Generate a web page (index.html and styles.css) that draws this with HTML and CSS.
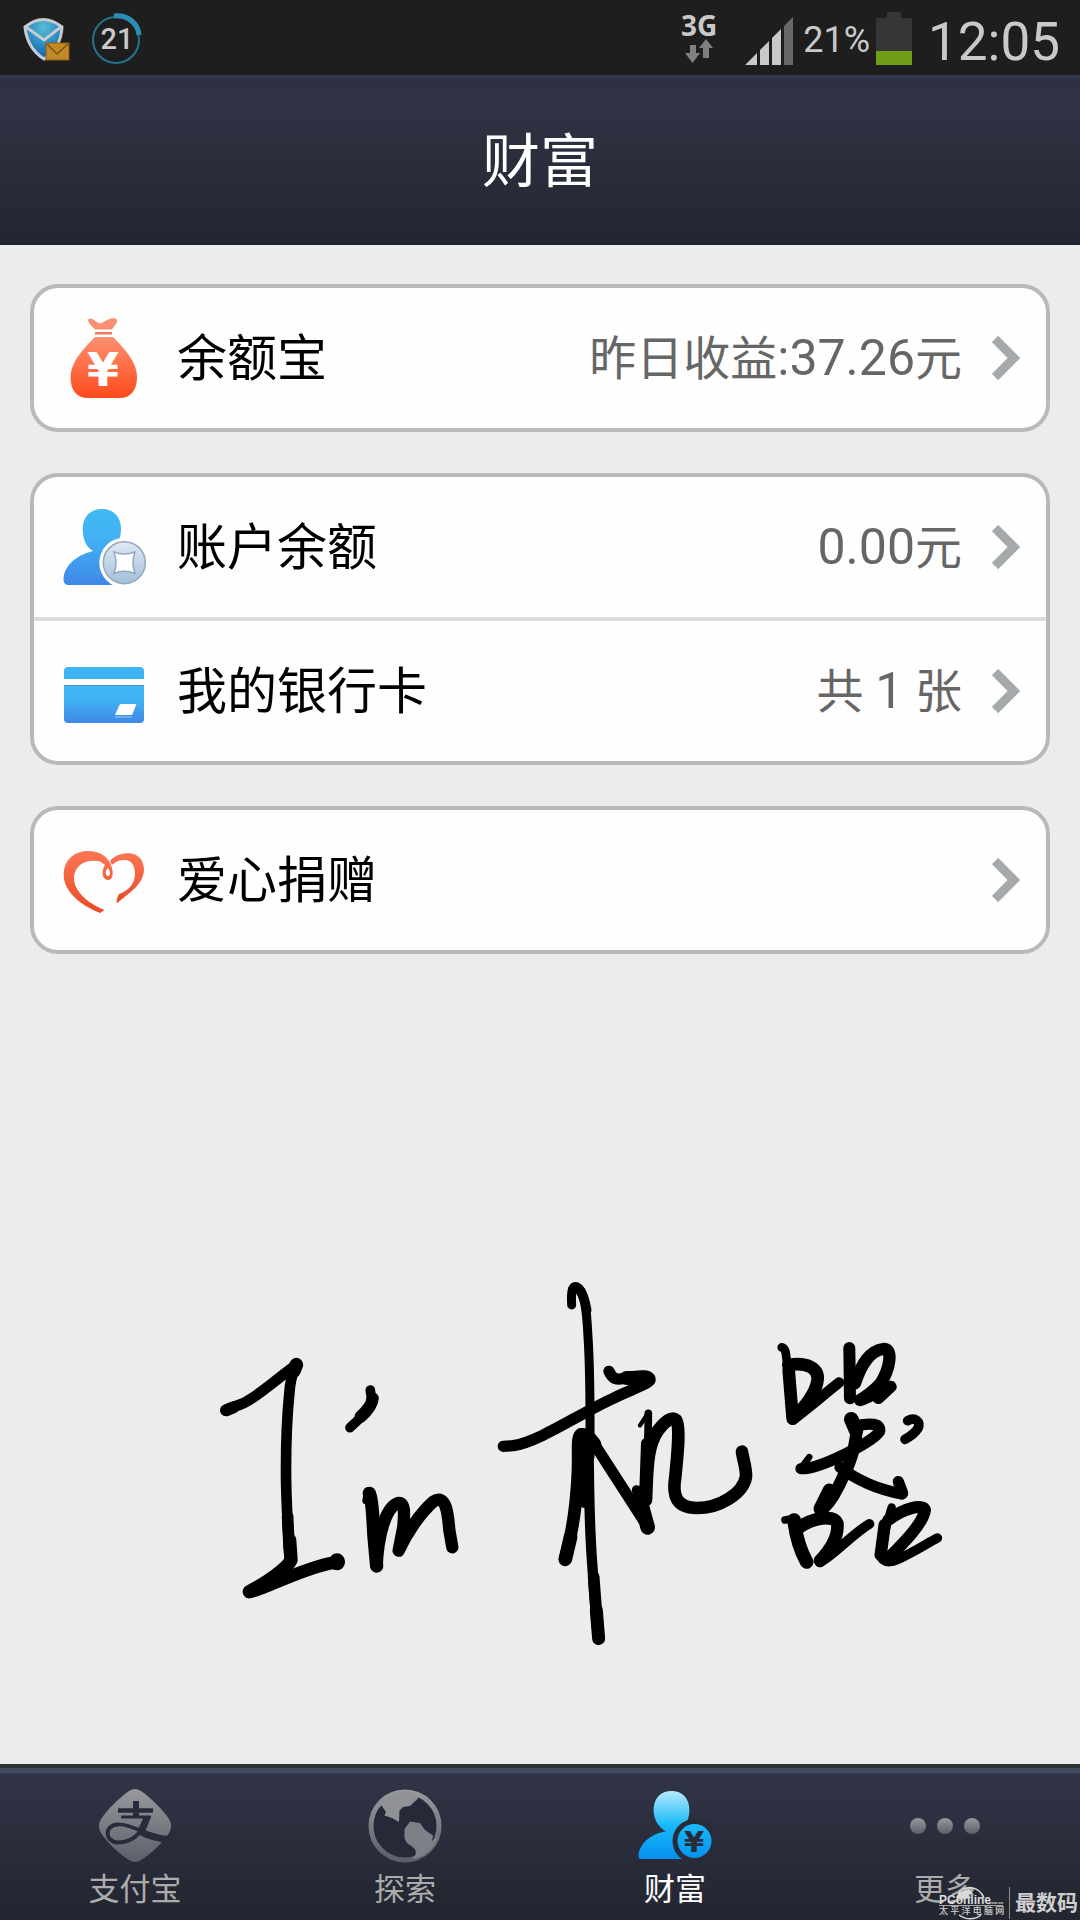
FILE: index.html
```html
<!DOCTYPE html>
<html lang="zh-CN">
<head>
    <meta charset="UTF-8">
    <meta name="viewport" content="width=device-width, initial-scale=1.0">
    <title>财富</title>
    <link rel="stylesheet" href="styles.css">
</head>
<body>
    <!-- Status bar -->
    <div class="status-bar">
        <svg class="status-mail" viewBox="0 0 48 46" aria-hidden="true">
            <defs>
                <radialGradient id="shield" cx=".5" cy=".2" r=".8">
                    <stop offset="0" stop-color="#58bcd4"/>
                    <stop offset="1" stop-color="#0b62b4"/>
                </radialGradient>
            </defs>
            <path d="M2 11 Q20 -4 39 11 Q38 32 21 43 Q4 32 2 11z" fill="url(#shield)" stroke="#c6cbd0" stroke-width="3"/>
            <path d="M3 11 L21 24 L38 11" fill="none" stroke="#c6cbd0" stroke-width="3"/>
            <rect x="23" y="27" width="23" height="17" fill="#c28a25" stroke="#8a5c17"/>
            <path d="M24 28 L34 38 L45 28" fill="none" stroke="#7a5216" stroke-width="1.5"/>
        </svg>
        <div class="status-count">
            <svg viewBox="0 0 52 52" aria-hidden="true">
                <circle cx="25" cy="27" r="23" fill="none" stroke="#24738c" stroke-width="2"/>
                <path d="M23 3 C36 1 47 10 48 22" fill="none" stroke="#2a8fb5" stroke-width="5"/>
            </svg>
            <span>21</span>
        </div>

        <div class="status-network">
            <span>3G</span>
            <svg viewBox="0 0 28 24" aria-hidden="true">
                <path d="M5 6 H11 V14 H15 L7.500 24 L0 14 H5z M18 19 V9 H14 L21 0 L28 9 H24 V19z" fill="#7f7f7f"/>
            </svg>
        </div>
        <svg class="status-signal" viewBox="0 0 48 48" aria-hidden="true">
            <path d="M0 48 L12 36 V48z M15 48 V33 L24 24 V48z M27 48 V21 L36 12 V48z" fill="#c9c9c9"/>
            <path d="M39 48 V9 L48 0 V48z" fill="#686868"/>
        </svg>
        <span class="status-percent">21%</span>
        <svg class="status-battery" viewBox="0 0 36 53" aria-hidden="true">
            <path d="M0 6 H11 V0 H25 V6 H36 V39 H0z" fill="#363636"/>
            <path d="M0 39 H36 V53 H0z" fill="#6f9f18"/>
        </svg>
        <span class="status-time">12:05</span>
    </div>

    <header class="title-bar">
        <h1>财富</h1>
    </header>

    <main>
        <div class="cards">
            <div class="card">
                <a class="row" href="#yuebao">
                    <svg class="row-icon" viewBox="0 0 84 84" aria-hidden="true">
                        <defs>
                            <linearGradient id="bag" x1="0" y1="0" x2="0" y2="1">
                                <stop offset="0" stop-color="#ff9070"/>
                                <stop offset="1" stop-color="#ff4a1c"/>
                            </linearGradient>
                        </defs>
                        <path d="M26.500 3 C31 0 35 9 40 7 C46 3 51 1 54.500 3 C57 6 52 10 50 13.500 H33 C29 9 25 6 26.500 3z" fill="#fb8f74"/>
                        <rect x="33" y="16" width="17" height="2.500" fill="#f37a58"/>
                        <path d="M33 21 H51 C62 32 75 46 75 61 C75 75 68 82 58 82 H26 C15 82 8.600 75 8.600 61 C8.600 46 22 32 33 21z" fill="url(#bag)"/>
                        <text class="yen-bag" x="41" y="70">¥</text>
                    </svg>
                    <span class="row-label">余额宝</span>
                    <span class="row-value">昨日收益<span class="num">:37.26</span>元</span>
                    <svg class="chevron" viewBox="0 0 28 44" aria-hidden="true"><path d="M3 3 L22 22 L3 41"/></svg>
                </a>
            </div>

            <div class="card">
                <a class="row" href="#balance">
                    <svg class="row-icon" viewBox="0 0 84 84" aria-hidden="true">
                        <defs>
                            <linearGradient id="blue" x1="0" y1="0" x2="0" y2="1">
                                <stop offset="0" stop-color="#3fbaf5"/>
                                <stop offset=".4" stop-color="#42b1f2"/>
                                <stop offset="1" stop-color="#3f88e8"/>
                            </linearGradient>
                            <linearGradient id="coin" x1="0" y1="0" x2="0" y2="1">
                                <stop offset="0" stop-color="#dfe9f2"/>
                                <stop offset="1" stop-color="#a4bfdb"/>
                            </linearGradient>
                        </defs>
                        <path d="M31 46 C24 42 20.700 34 20.700 24 C20.700 12 28 4 40 4 C52 4 59 12 59 24 C59 34 55 41 49 46 L60 52 V80 H6 Q1 80 1.500 73 C3 58 18 49 31 46z" fill="url(#blue)"/>
                        <circle cx="62.300" cy="57.700" r="25" fill="#fff"/>
                        <circle cx="62.300" cy="57.700" r="21" fill="url(#coin)" stroke="#91a8bf" stroke-width="1.500"/>
                        <path d="M52 47 Q62 51 73 47 Q69 58 73 68.500 Q62 64 52 68.500 Q56 58 52 47z" fill="#fff" stroke="#91a8bf" stroke-width="1.500"/>
                    </svg>
                    <span class="row-label">账户余额</span>
                    <span class="row-value"><span class="num">0.00</span>元</span>
                    <svg class="chevron" viewBox="0 0 28 44" aria-hidden="true"><path d="M3 3 L22 22 L3 41"/></svg>
                </a>
                <a class="row" href="#cards">
                    <svg class="row-icon" viewBox="0 0 84 84" aria-hidden="true">
                        <path d="M2 30 V22 Q2 18 6 18 H78 Q82 18 82 22 V30z" fill="#3fb4f3"/>
                        <path d="M2 36 H82 V70 Q82 74 78 74 H6 Q2 74 2 70z" fill="url(#blue)"/>
                        <path d="M2 36.500 H82" stroke="#3d8edb"/>
                        <path d="M58 55 H74.500 L70 66 H53z" fill="#fff"/>
                        <path d="M53 68 H70" stroke="#7cb6f3" stroke-width="1.500"/>
                    </svg>
                    <span class="row-label">我的银行卡</span>
                    <span class="row-value">共 <span class="num">1</span> 张</span>
                    <svg class="chevron" viewBox="0 0 28 44" aria-hidden="true"><path d="M3 3 L22 22 L3 41"/></svg>
                </a>
            </div>

            <div class="card">
                <a class="row" href="#donate">
                    <svg class="row-icon" viewBox="0 0 84 84" aria-hidden="true">
                        <defs>
                            <linearGradient id="heart" x1="0" y1="0" x2="0" y2="1">
                                <stop offset="0" stop-color="#fb7653"/>
                                <stop offset="1" stop-color="#ea4a27"/>
                            </linearGradient>
                        </defs>
                        <path d="M38 75 C20 68 1.700 54 1.700 37 C1.700 22 12 13 26 13 C38 13 46 19 49 27 C52 35 51 42 46 42 C40 42 39 33 43 27 C38 22 34 22.500 28 23 C18 24 11.500 32 12 41 C13 56 30 67 42.500 72z" fill="url(#heart)"/>
                        <path d="M46 30 C43 32 43 38 46 38 C49 38 48 32 46 30z" fill="#fff"/>
                        <path d="M48 23 C53 17 60 15 68 15.300 C76 16 82 22 82 32 C81 48 66 55 55 65.500 C54 62 56 58 57 56 C66 53 73 46 73 36 C73 27 69 22 63 22 C57 22 53 24 50 27z" fill="url(#heart)"/>
                    </svg>
                    <span class="row-label">爱心捐赠</span>
                    <svg class="chevron" viewBox="0 0 28 44" aria-hidden="true"><path d="M3 3 L22 22 L3 41"/></svg>
                </a>
            </div>
        </div>

        <!-- Handwritten note -->
        <svg class="handwriting" viewBox="0 0 1080 390" role="img" aria-label="I'm 机器">
            <g transform="translate(200 60) scale(.3333)">
                <path d="M78 242 C100 224 112 236 160 202 C210 168 250 132 285 108" stroke-width="32"/>
                <path d="M78 241 L100 232" stroke-width="36"/>
                <path d="M289 104 L282 122" stroke-width="41"/>
                <path d="M284 115 C274 140 270 160 268 190 C260 270 258 350 258 420 C258 520 264 600 270 690" stroke-width="32"/>
                <path d="M263 560 C264 600 267 640 270 680" stroke-width="35"/>
                <path d="M269 630 C271 660 272 670 273 690 C262 715 200 758 148 785" stroke-width="40"/>
                <path d="M148 786 C190 780 300 716 400 698" stroke-width="38"/>
                <path d="M411 694 V697" stroke-width="48"/>
                <path d="M511 180 C512 196 518 206 514 220 C500 250 470 275 450 293" stroke-width="29"/>
                <path d="M518 205 C516 225 500 244 482 260" stroke-width="37"/>
                <path d="M498 512 L502 490" stroke-width="22"/>
                <path d="M508 490 C518 510 518 560 522 620 L530 708" stroke-width="40"/>
                <path d="M530 708 C534 620 556 530 595 519 C618 517 612 560 610 590 L596 662 C620 610 660 550 700 515 C738 490 744 550 748 600 L757 652" stroke-width="37"/>
            </g>
            <g transform="translate(480 0) scale(.3333)">
                <path d="M275 105 C273 70 275 48 290 50 C315 60 320 120 324 200 C332 320 330 450 330 560" stroke-width="27"/>
                <path d="M278 60 C290 38 310 65 320 120" stroke-width="29"/>
                <path d="M326 500 C326 650 330 800 338 900 C342 980 348 1040 354 1100" stroke-width="31"/>
                <path d="M341 920 L354 1090" stroke-width="35"/>
                <path d="M349 1020 L356 1106" stroke-width="39"/>
                <path d="M387 304 C400 334 415 328 440 324 C480 316 512 314 510 330 C500 345 450 360 400 385 C300 430 180 514 100 527 L70 529" stroke-width="34"/>
                <path d="M440 324 L500 323 L470 338" stroke-width="42"/>
                <path d="M255 868 C280 780 290 700 294 600 C296 540 290 500 303 493 C325 490 335 510 345 522" stroke-width="38"/>
                <path d="M315 510 L312 700" stroke-width="28"/>
                <path d="M345 525 L490 750" stroke-width="34"/>
                <path d="M256 868 L272 800" stroke-width="41"/>
                <path d="M480 466 L505 428" stroke-width="13"/>
                <path d="M505 430 C505 500 500 600 494 690" stroke-width="23"/>
                <path d="M500 520 L494 690" stroke-width="34"/>
                <path d="M470 660 L480 700" stroke-width="29"/>
                <path d="M486 710 L503 772" stroke-width="44"/>
                <path d="M498 690 C502 600 500 530 535 480 C555 455 575 438 588 450 C602 470 592 560 586 620 C576 680 590 712 650 714 C720 714 790 670 798 620 C800 600 790 570 786 545" stroke-width="38"/>
            </g>
            <g transform="translate(760 50) scale(.3333)">
                <path d="M65 82 C80 84 78 110 83 150" stroke-width="26"/>
                <path d="M86 150 L98 296" stroke-width="38"/>
                <path d="M85 135 C140 125 180 145 172 185 C165 225 130 265 100 295" stroke-width="38"/>
                <path d="M110 290 C150 260 190 225 237 188" stroke-width="32"/>
                <path d="M268 84 L270 235" stroke-width="36"/>
                <path d="M285 190 C305 130 330 92 370 87 C402 85 388 150 362 190 C340 215 310 235 300 240" stroke-width="37"/>
                <path d="M308 238 L392 200 L355 234" stroke-width="36"/>
                <path d="M274 298 L288 330" stroke-width="44"/>
                <path d="M285 318 C330 308 366 310 358 335 C345 355 300 380 260 400 C210 425 160 447 123 446" stroke-width="34"/>
                <path d="M123 444 L148 411" stroke-width="19"/>
                <path d="M290 330 C285 400 260 450 235 500 C215 540 200 560 182 570" stroke-width="37"/>
                <path d="M208 510 L180 566" stroke-width="39"/>
                <path d="M240 442 C290 480 350 508 425 522" stroke-width="34"/>
                <path d="M415 485 L428 520" stroke-width="34"/>
                <path d="M443 302 C465 290 484 305 474 325 C465 340 450 350 435 358" stroke-width="29"/>
                <path d="M75 600 L95 596" stroke-width="23"/>
                <path d="M102 600 C108 650 120 690 140 726" stroke-width="41"/>
                <path d="M115 624 C160 592 222 584 232 610 C236 650 210 690 180 722" stroke-width="38"/>
                <path d="M180 727 C220 706 280 640 328 612" stroke-width="30"/>
                <path d="M395 562 C385 590 375 640 360 705" stroke-width="25"/>
                <path d="M374 615 L362 705" stroke-width="37"/>
                <path d="M385 600 C430 565 490 550 495 570 C490 610 430 670 385 715" stroke-width="36"/>
                <path d="M362 708 C375 734 400 727 440 705 C480 685 510 665 532 654" stroke-width="29"/>
            </g>
        </svg>
    </main>

    <!-- Bottom navigation -->
    <nav class="tab-bar">
        <a class="tab" href="#alipay">
            <svg viewBox="0 0 74 74" aria-hidden="true">
                <defs>
                    <linearGradient id="grey" x1="0" y1="0" x2="0" y2="1">
                        <stop offset="0" stop-color="#97999d"/>
                        <stop offset="1" stop-color="#5c5f69"/>
                    </linearGradient>
                </defs>
                <path d="M31 2 Q37 -2 43 2 C53 9 65 21 71 30 Q75 37 71 44 C65 53 53 65 43 71 Q37 75 31 71 C21 65 9 53 3 44 Q-1 37 3 30 C9 21 21 9 31 2z" fill="url(#grey)"/>
                <g fill="none" stroke="#282c3a">
                    <path d="M38 12 V27" stroke-width="6"/>
                    <path d="M20 21.500 H55" stroke-width="4.500"/>
                    <path d="M23 28 H53" stroke-width="3"/>
                    <path d="M50 28 C48 34 46 39 41 44 C35 51 27 53.500 20 53.500 C6 53 6 35 21 35.500" stroke-width="4"/>
                    <path d="M49 28 C47 35 45 39 42 43" stroke-width="7"/>
                    <path d="M21 35.500 C34 35 48 47 74 50" stroke-width="3.500"/>
                    <path d="M43 43 C52 48 62 50 75 51" stroke-width="7"/>
                </g>
            </svg>
            <span>支付宝</span>
        </a>
        <a class="tab" href="#explore">
            <svg viewBox="0 0 74 74" aria-hidden="true">
                <circle cx="37" cy="37" r="34" fill="#252938" stroke="url(#grey)" stroke-width="5"/>
                <path d="M12.500 15 L18 23 L16.500 26.500 L24 29 L31 33 L31.500 21.500 L35 18 L42 17 L50.500 9 C46 1 26 -2 12.500 15z" fill="#909296"/>
                <path d="M36.500 40 L42 32.500 L52 34 L57 41 L65 46.500 L64 52 L70 47 C67 60 56 69 43.500 70 Q49 66 47.500 61.500 Q46 58 40 55 Q36.500 51 36.500 48z" fill="#7d8086"/>
            </svg>
            <span>探索</span>
        </a>
        <a class="tab tab-active" href="#wealth">
            <svg viewBox="0 0 74 74" aria-hidden="true">
                <defs>
                    <linearGradient id="cyan" gradientUnits="userSpaceOnUse" x1="0" y1="2" x2="0" y2="70">
                        <stop offset="0" stop-color="#b5eaff"/>
                        <stop offset=".5" stop-color="#19baf8"/>
                        <stop offset="1" stop-color="#0490ef"/>
                    </linearGradient>
                </defs>
                <path d="M28 42.500 C20 38 15.600 30 15.600 21 C15.600 9 23 2 33.500 2 C44 2 51.400 9 51.400 21 C51.400 28 49 34 46 38 L52 44 V70 H3 Q0 70 .500 66 C2 53 15 44 28 42.500z" fill="url(#cyan)"/>
                <circle cx="56.500" cy="52" r="22" fill="#282c38"/>
                <circle cx="56.500" cy="52" r="17" fill="url(#cyan)"/>
                <text class="yen-tab" x="56" y="63">¥</text>
            </svg>
            <span>财富</span>
        </a>
        <a class="tab" href="#more">
            <svg viewBox="0 0 74 74" aria-hidden="true">
                <circle cx="10" cy="37" r="8" fill="url(#grey)"/>
                <circle cx="37" cy="37" r="8" fill="url(#grey)"/>
                <circle cx="64" cy="37" r="8" fill="url(#grey)"/>
            </svg>
            <span>更多</span>
        </a>

        <div class="watermark">
            <svg viewBox="0 0 68 34" aria-hidden="true">
                <path d="M20 8 C27 -2 41 0 46 12" fill="none" stroke="#d9d9d9" stroke-width="1.500"/>
                <path d="M18 12 C20 6 26 3 32 4 L36 9 L30 8 L33 12z" fill="#d9d9d9"/>
                <path d="M21 29 C28 34 37 34 43 29" fill="none" stroke="#d9d9d9" stroke-width="1.500"/>
                <path d="M1 19.500 H65" stroke="#a5a5a5" stroke-width="1"/>
                <text class="mark-en" x="1" y="18">PConline</text>
                <text class="mark-com" x="50" y="18">.com.cn</text>
                <text class="mark-cn" x="1" y="28">太 平 洋 电 脑 网</text>
            </svg>
            <span>最数码</span>
        </div>
    </nav>
</body>
</html>
```

FILE: styles.css
```css
* {
    margin: 0;
    padding: 0;
    box-sizing: border-box;
}

body {
    font-family: Roboto, "Noto Sans CJK SC", sans-serif;
    background-color: #ebedec;
    color: #000;
    display: flex;
    flex-direction: column;
    min-height: 100vh;
}

a {
    color: inherit;
    text-decoration: none;
}

svg {
    display: block;
    flex: none;
}

/* Status bar */
.status-bar {
    display: flex;
    align-items: center;
    height: 75px;
    padding: 2px 20px 0 23px;
    background-color: #1e1e1e;
    color: #c9c9c9;
}

.status-mail {
    width: 48px;
    height: 46px;
}

.status-count {
    display: grid;
    place-items: center;
    width: 52px;
    margin-left: 20px;
    margin-right: auto;
    font-size: 29px;
    font-weight: 500;
}

.status-count svg,
.status-count span {
    grid-area: 1 / 1;
}

.status-network {
    display: flex;
    flex-direction: column;
    align-items: center;
    margin-right: 28px;
    padding-bottom: 4px;
    font-family: "Open Sans", sans-serif;
    font-size: 28px;
    font-weight: 700;
    line-height: 28px;
}

.status-network svg {
    width: 28px;
    height: 24px;
}

.status-signal {
    width: 48px;
    height: 48px;
    margin-top: 4px;
    margin-right: 10px;
}

.status-percent {
    font-size: 36px;
    padding-top: 2px;
}

.status-battery {
    width: 36px;
    height: 53px;
    margin-left: 6px;
    margin-right: 16px;
}

.status-time {
    font-size: 53px;
    line-height: 64px;
    padding-top: 6px;
}

/* Title */
.title-bar {
    display: flex;
    align-items: center;
    justify-content: center;
    height: 170px;
    padding-bottom: 8px;
    border-top: 4px solid #32374a;
    border-bottom: 2px solid #1f212c;
    background: linear-gradient(#2d3140, #2f3344 15%, #232630);
}

.title-bar h1 {
    color: #fff;
    font-size: 58px;
    font-weight: 400;
}

main {
    flex: 1;
}

/* Cards */
.cards {
    display: flex;
    flex-direction: column;
    gap: 41px;
    padding: 39px 30px 0;
}

.card {
    background-color: #fefefe;
    border: 4px solid #b9b9b9;
    border-radius: 28px;
    overflow: hidden;
}

.row {
    display: flex;
    align-items: center;
    min-height: 140px;
    padding: 0 26px 0 28px;
}

.row + .row {
    min-height: 144px;
    border-top: 4px solid #dcdcdc;
}

.row-icon {
    width: 84px;
    height: 84px;
    margin-right: 31px;
}

.row-label,
.row-value {
    padding-bottom: 8px;
}

.row-label {
    font-size: 50px;
    margin-right: auto;
}

.row-value {
    color: #666;
    font-size: 47px;
}

.num {
    font-size: 50px;
}

.chevron {
    width: 28px;
    height: 44px;
    margin-left: 30px;
    fill: none;
    stroke: #a5a9ab;
    stroke-width: 9;
}

.yen-bag,
.yen-tab {
    font-family: "DejaVu Sans", sans-serif;
    font-weight: 700;
    text-anchor: middle;
}

.yen-bag {
    fill: #fff;
    font-size: 46px;
}

.yen-tab {
    fill: #282c38;
    font-size: 29px;
}

/* Handwriting */
.handwriting {
    width: 100%;
    margin-top: 316px;
    fill: none;
    stroke: #000;
    stroke-linecap: round;
    stroke-linejoin: round;
}

/* Bottom navigation */
.tab-bar {
    position: relative;
    display: flex;
    border-top: 4px solid #2b3435;
    background: linear-gradient(#444a61 5px, #303446 6px, #232630);
}

.tab {
    flex: 1;
    display: flex;
    flex-direction: column;
    align-items: center;
    gap: 9px;
    padding: 21px 0 12px;
    color: #acacac;
    font-size: 31px;
    line-height: 36px;
}

.tab svg {
    width: 74px;
    height: 74px;
}

.tab-active {
    color: #fff;
}

.watermark {
    position: absolute;
    right: 2px;
    bottom: 0;
    display: flex;
    align-items: center;
    color: #cfcfcf;
    font-size: 21px;
    font-weight: 700;
    line-height: 32px;
}

.watermark svg {
    width: 68px;
    height: 34px;
}

.watermark span {
    margin-left: 3px;
    padding-left: 5px;
    border-left: 1px solid #8c8c8c;
}

.mark-en,
.mark-com {
    font-family: "Liberation Sans", sans-serif;
    fill: #dcdcdc;
}

.mark-en {
    font-size: 12px;
}

.mark-com {
    font-size: 4px;
}

.mark-cn {
    font-size: 9px;
    font-weight: 500;
    fill: #cfcfcf;
}
```
